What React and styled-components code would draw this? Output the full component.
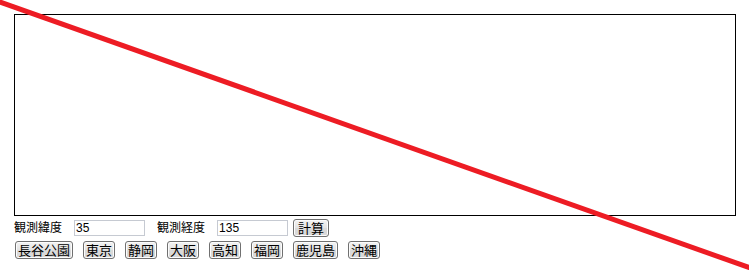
import styled, { createGlobalStyle } from "styled-components";

const GlobalStyle = createGlobalStyle`
  html, body {
    margin: 0;
    padding: 0;
    background: #fff;
  }
  body {
    font-family: "Liberation Sans", "Noto Sans CJK JP", sans-serif;
    font-size: 12px;
    color: #000;
  }
`;

const Page = styled.div`
  position: relative;
  width: 749px;
  height: 270px;
  overflow: hidden;
  padding: 14px 0 0 14px;
  box-sizing: border-box;
`;

const Board = styled.div`
  width: 722px;
  height: 202px;
  box-sizing: border-box;
  border: 1px solid #000;
  background: #fff;
`;

const Row = styled.div`
  display: flex;
  align-items: center;
  height: 18px;
  margin-top: ${(p) => p.$top}px;
  margin-left: ${(p) => p.$left || 0}px;
  gap: ${(p) => p.$gap || 0}px;
`;

const Label = styled.span`
  line-height: 16px;
  margin-right: 12px;
  white-space: nowrap;
`;

const Input = styled.input`
  width: 71px;
  height: 16px;
  box-sizing: border-box;
  border: 1px solid #c6cad2;
  padding: 0 1px;
  margin: 0 ${(p) => p.$after}px 0 0;
  font-family: "Liberation Sans", sans-serif;
  font-size: 12px;
  color: #000;
  outline: none;
`;

const Button = styled.button`
  height: 18px;
  box-sizing: border-box;
  padding: 0 ${(p) => p.$pad || 2}px;
  margin: 0;
  border: 1px solid #707070;
  border-radius: 3px;
  background: linear-gradient(#f3f3f3, #e3e3e3 50%, #dadada 51%, #d8d8d8);
  box-shadow: inset 0 0 0 1px #fcfcfc;
  font-family: "Noto Sans CJK JP", sans-serif;
  font-size: 13px;
  line-height: 16px;
  color: #000;
  white-space: nowrap;
`;

const Overlay = styled.svg`
  position: absolute;
  left: 0;
  top: 0;
  pointer-events: none;
`;

const places = ["長谷公園", "東京", "静岡", "大阪", "高知", "福岡", "鹿児島", "沖縄"];

export default function App() {
  return (
    <Page>
      <GlobalStyle />
      <Board />
      <Row $top={3}>
        <Label>観測緯度</Label>
        <Input defaultValue="35" $after={12} />
        <Label>観測経度</Label>
        <Input defaultValue="135" $after={5} />
        <Button $pad={4}>計算</Button>
      </Row>
      <Row $top={4} $left={1} $gap={10}>
        {places.map((name) => (
          <Button key={name}>{name}</Button>
        ))}
      </Row>
      <Overlay width="749" height="270" viewBox="0 0 749 270">
        <line x1="-20" y1="-5.1" x2="769" y2="274.6" stroke="#ed1c24" strokeWidth="5" />
      </Overlay>
    </Page>
  );
}
